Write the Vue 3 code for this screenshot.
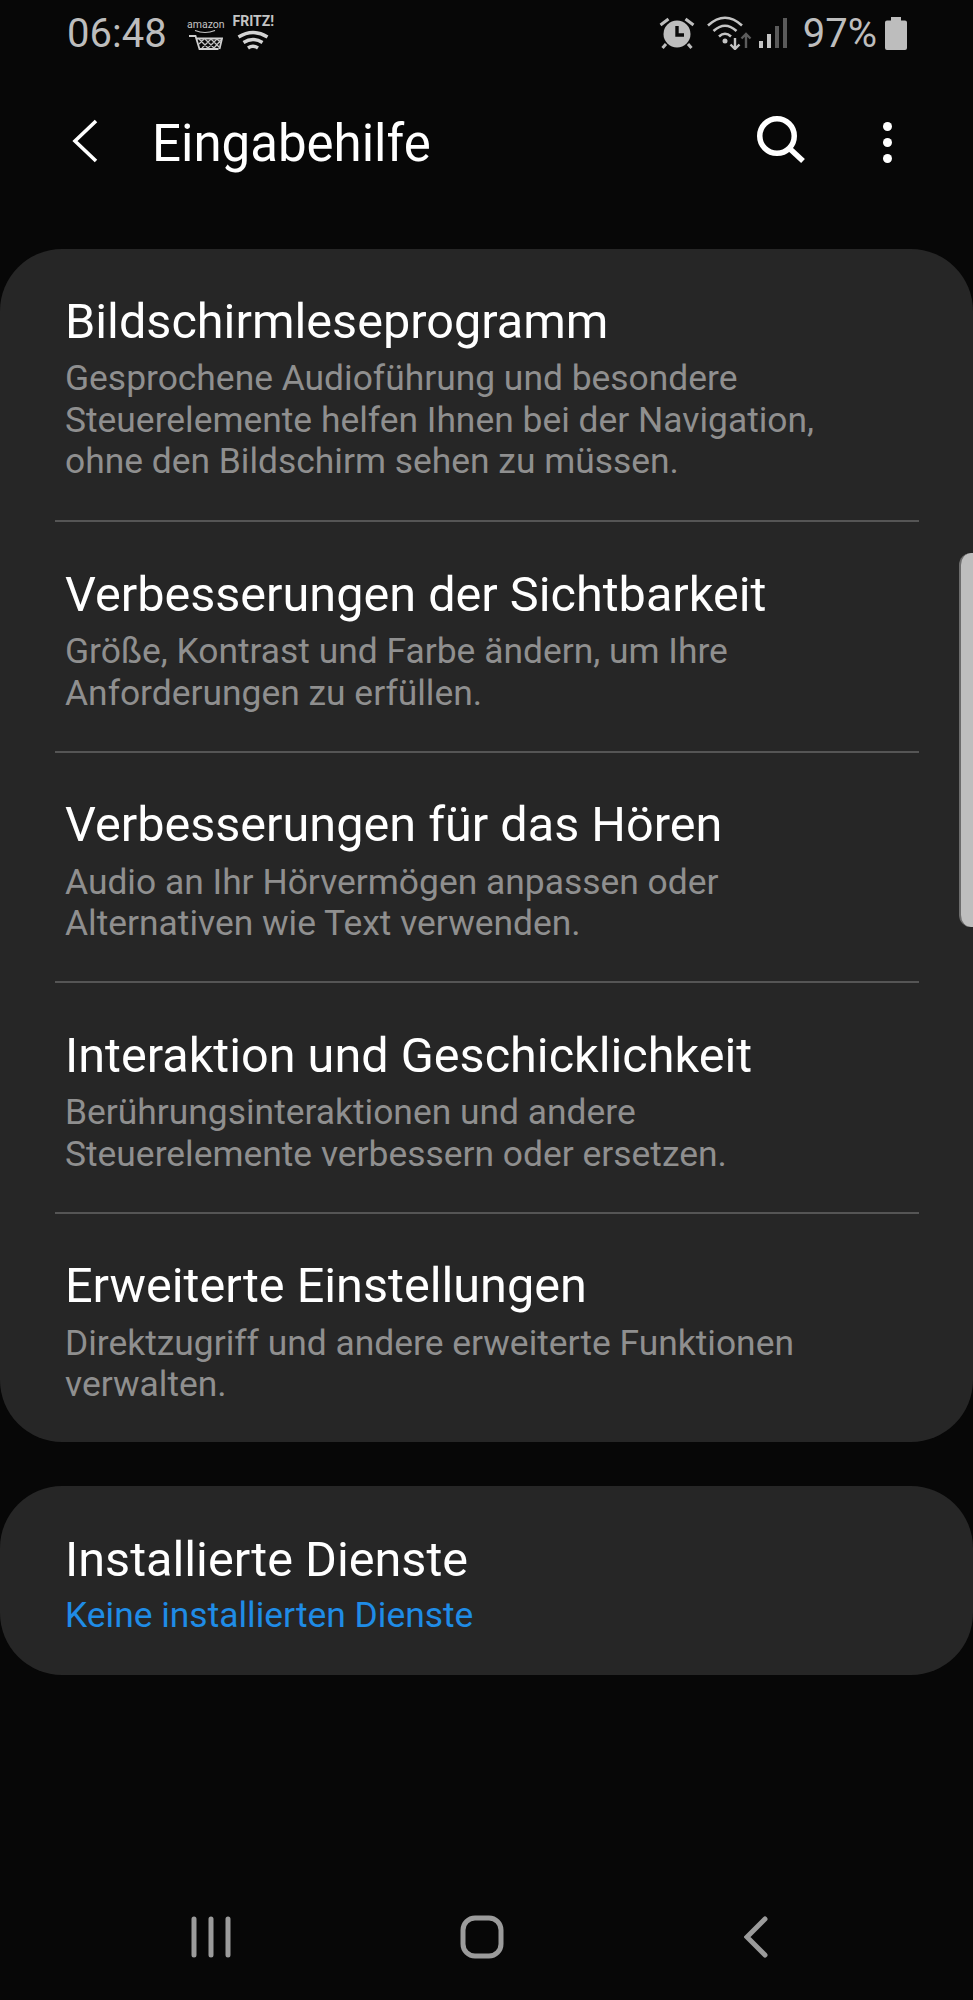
<template>
  <div class="screen">
    <div class="status">
      <span class="time">06:48</span>
      <div class="notif">
        <div class="amazon">
          <span class="amazon-word">amazon</span>
          <svg width="34" height="20" viewBox="0 0 34 20">
            <path d="M6 0.500Q16 4.500 26 0.500" fill="none" stroke="#c4c4c4" stroke-width="1.200" />
            <path d="M0 6h6.500l4 13h19M8 8.500h25l-2.500 10.500" fill="none" stroke="#d0d0d0" stroke-width="1.800" />
            <path d="M10 9l9 9M16 9l9 9M22 9l9 9M28 9l4 4M10 14l5-5M13 18l9-9M19 18l9-9M25 18l7-8" fill="none" stroke="#c4c4c4" stroke-width="1.300" />
          </svg>
        </div>
        <div class="fritz">
          <span class="fritz-word">FRITZ!</span>
          <svg width="32" height="20" viewBox="0 0 32 20">
            <path d="M1.500 7Q16-2 30.500 7M6.500 12.500Q16 6.500 25.500 12.500M11 18Q16 14.500 21 18" fill="none" stroke="#d4d4d4" stroke-width="3.400" />
          </svg>
        </div>
      </div>
      <div class="sys">
        <svg class="alarm" width="36" height="34" viewBox="0 0 36 34">
          <circle cx="18" cy="18" r="13.500" fill="#bdbdbd" />
          <path d="M18 10v9h7" fill="none" stroke="#0a0a0a" stroke-width="3.400" />
          <path d="M1.500 9l8-6M34.500 9l-8-6M7 28l-3.500 4M29 28l3.500 4" fill="none" stroke="#bdbdbd" stroke-width="3" />
        </svg>
        <svg class="wifi" width="46" height="34" viewBox="0 0 46 34">
          <path d="M2 9.500Q19-6 36 9.500M7.500 15Q19 4.500 30.500 15M13 20.500Q19 15 25 20.500" fill="none" stroke="#c4c4c4" stroke-width="2.600" />
          <circle cx="19" cy="25" r="2.500" fill="#c4c4c4" />
          <path d="M29 22v11M24.500 28.500l4.500 4.500 4.500-4.500" fill="none" stroke="#c4c4c4" stroke-width="2.400" />
          <path d="M40 32V18M35.500 22.500l4.500-4.500 4.500 4.500" fill="none" stroke="#5c5c5c" stroke-width="2.400" />
        </svg>
        <svg class="signal" width="29" height="32" viewBox="0 0 29 32">
          <rect x="0" y="24" width="4" height="7" fill="#c4c4c4" />
          <rect x="8" y="17" width="4" height="14" fill="#c4c4c4" />
          <rect x="16" y="9" width="4" height="22" fill="#5a5a5a" />
          <rect x="24" y="1" width="4" height="30" fill="#5a5a5a" />
        </svg>
        <span class="pct">97%</span>
        <svg class="battery" width="22" height="33" viewBox="0 0 22 33">
          <path d="M6 0h10v3.500h4a2 2 0 0 1 2 2V31a2 2 0 0 1-2 2H2a2 2 0 0 1-2-2V5.500a2 2 0 0 1 2-2h4z" fill="#bdbdbd" />
        </svg>
      </div>
    </div>

    <div class="appbar">
      <svg class="back" width="26" height="44" viewBox="0 0 26 44">
        <path d="M24 2L3 22l21 20" fill="none" stroke="#fff" stroke-width="3.600" />
      </svg>
      <h1 class="title">Eingabehilfe</h1>
      <svg class="search" width="48" height="48" viewBox="0 0 48 48">
        <circle cx="20" cy="20" r="17.250" fill="none" stroke="#fff" stroke-width="5.500" />
        <path d="M32 32l14 13" fill="none" stroke="#fff" stroke-width="5.500" />
      </svg>
      <div class="dots"><i></i><i></i><i></i></div>
    </div>

    <section class="card main">
      <div v-for="(row, i) in rows" :key="row.title" class="row" :class="{ last: i === rows.length - 1 }">
        <div class="row-title">{{ row.title }}</div>
        <div class="row-sub">
          <div v-for="line in row.lines" :key="line">{{ line }}</div>
        </div>
      </div>
    </section>

    <section class="card second">
      <div class="row-title">Installierte Dienste</div>
      <div class="row-sub blue">Keine installierten Dienste</div>
    </section>

    <div class="scrollbar"></div>

    <nav class="nav">
      <svg class="nav-recent" width="40" height="42" viewBox="0 0 40 42">
        <path d="M3 3v36M20 3v36M37 3v36" fill="none" stroke="#9b9b9b" stroke-width="5" stroke-linecap="round" />
      </svg>
      <svg class="nav-home" width="44" height="44" viewBox="0 0 44 44">
        <rect x="3" y="3" width="38" height="38" rx="12" fill="none" stroke="#9b9b9b" stroke-width="5" />
      </svg>
      <svg class="nav-back" width="24" height="42" viewBox="0 0 24 42">
        <path d="M21 3L3 21l18 18" fill="none" stroke="#9b9b9b" stroke-width="5" stroke-linecap="round" />
      </svg>
    </nav>
  </div>
</template>

<script setup>
const rows = [
  {
    title: 'Bildschirmleseprogramm',
    lines: [
      'Gesprochene Audioführung und besondere',
      'Steuerelemente helfen Ihnen bei der Navigation,',
      'ohne den Bildschirm sehen zu müssen.'
    ]
  },
  {
    title: 'Verbesserungen der Sichtbarkeit',
    lines: ['Größe, Kontrast und Farbe ändern, um Ihre', 'Anforderungen zu erfüllen.']
  },
  {
    title: 'Verbesserungen für das Hören',
    lines: ['Audio an Ihr Hörvermögen anpassen oder', 'Alternativen wie Text verwenden.']
  },
  {
    title: 'Interaktion und Geschicklichkeit',
    lines: ['Berührungsinteraktionen und andere', 'Steuerelemente verbessern oder ersetzen.']
  },
  {
    title: 'Erweiterte Einstellungen',
    lines: ['Direktzugriff und andere erweiterte Funktionen', 'verwalten.']
  }
]
</script>

<style>
body { background: #070707; }
</style>

<style scoped>
.screen {
  position: relative;
  width: 973px;
  height: 2000px;
  overflow: hidden;
  background: #070707;
  font-family: Roboto, "Liberation Sans", sans-serif;
}
.status { display: flex; align-items: center; height: 66px; padding: 0 67px; }
.time { font-size: 40px; color: #bdbdbd; width: 117px; }
.notif { display: flex; gap: 8px; align-items: flex-end; height: 36px; margin: 0 0 2px 3px; }
.amazon, .fritz { display: flex; flex-direction: column; align-items: center; }
.amazon-word { font-size: 10.500px; line-height: 11px; color: #c4c4c4; }
.fritz-word { font-size: 14px; line-height: 14px; font-weight: 700; color: #c4c4c4; margin-bottom: 2px; }
.sys { display: flex; align-items: center; margin-left: auto; margin-right: -1px; }
.alarm { margin-right: 11px; }
.wifi { margin-right: 7px; }
.signal { margin-right: 15px; }
.pct { font-size: 40px; color: #bdbdbd; margin-right: 8px; }

.appbar { display: flex; align-items: center; height: 76px; padding: 39px 0 0 72px; }
.back { margin-bottom: 4px; }
.title { margin: 0 0 0 54px; font-size: 51px; font-weight: 400; color: #fff; }
.search { margin: 0 0 6px auto; }
.dots { display: flex; flex-direction: column; gap: 7px; margin: 0 81px 2px 78px; }
.dots i { display: block; width: 9px; height: 9px; border-radius: 50%; background: #fff; }

.card { background: #262626; border-radius: 62px; }
.main { margin-top: 68px; height: 1193px; }
.row { height: 230.500px; padding: 44.500px 0 0 10px; margin: 0 54px 0 55px; box-sizing: border-box; border-bottom: 2px solid #555; }
.row:first-child { height: 273px; }
.row.last { border-bottom: 0; }
.row-title { font-size: 48.600px; line-height: 56px; color: #fff; }
.row-sub { font-size: 35.400px; line-height: 41.500px; color: #8f8f8f; margin-top: 8.500px; }
.second { margin-top: 44px; height: 189px; padding: 46px 65px 0; box-sizing: border-box; }
.second .row-sub { margin-top: 7px; }
.blue { color: #1f8ce6; }

.scrollbar {
  position: absolute;
  left: 959px;
  top: 553px;
  width: 14px;
  height: 374px;
  background: #bebebe;
  border-left: 2px solid #6c6c6c;
  box-sizing: border-box;
  border-radius: 12px 0 0 12px;
}
.nav {
  position: absolute;
  left: 0;
  right: 0;
  top: 1915px;
  display: flex;
  align-items: center;
  padding-left: 191px;
}
.nav-home { margin-left: 229px; }
.nav-back { margin-left: 240px; }
</style>
